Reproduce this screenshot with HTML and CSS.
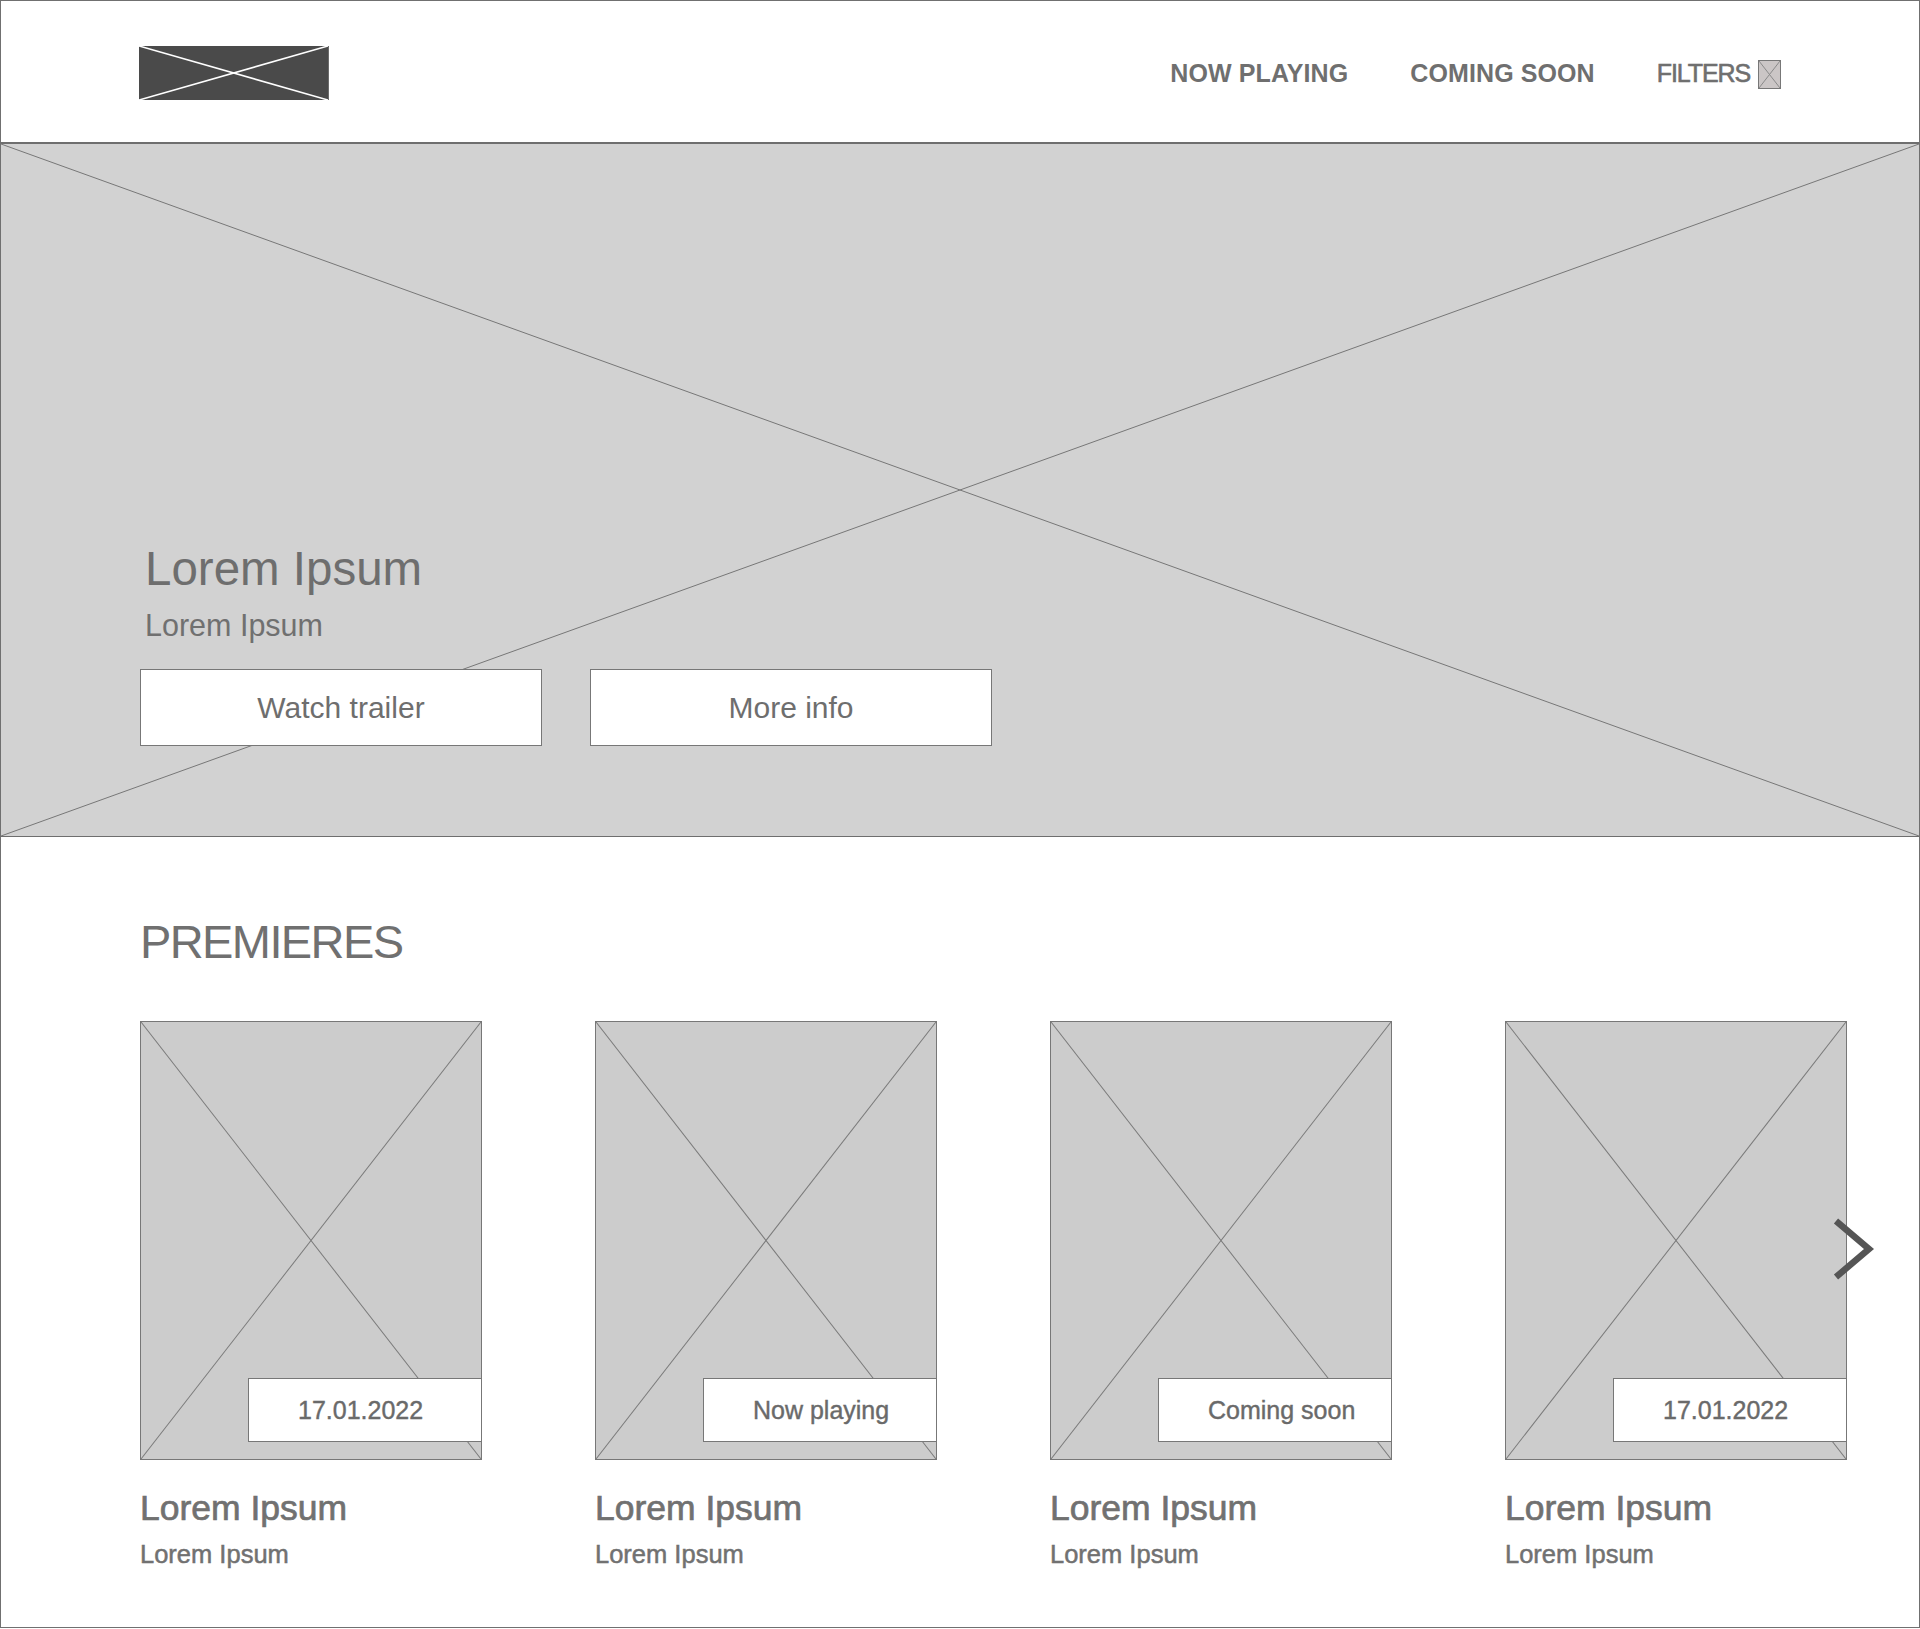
FILE: index.html
```html
<!DOCTYPE html>
<html lang="en">
<head>
<meta charset="utf-8">
<title>Cinema wireframe</title>
<link rel="stylesheet" href="styles.css">
</head>
<body>
<div class="frame">
  <header class="header">
    <div class="logo">
      <svg class="x-fill" viewBox="0 0 100 100" preserveAspectRatio="none">
        <line x1="0" y1="0" x2="100" y2="100" vector-effect="non-scaling-stroke"/>
        <line x1="0" y1="100" x2="100" y2="0" vector-effect="non-scaling-stroke"/>
      </svg>
    </div>
    <nav class="nav">
      <a class="nav-link">NOW PLAYING</a>
      <a class="nav-link">COMING SOON</a>
      <a class="nav-filter">FILTERS
        <span class="filter-icon">
          <svg class="x-fill" viewBox="0 0 100 100" preserveAspectRatio="none">
            <line x1="0" y1="0" x2="100" y2="100" vector-effect="non-scaling-stroke"/>
            <line x1="0" y1="100" x2="100" y2="0" vector-effect="non-scaling-stroke"/>
          </svg>
        </span>
      </a>
    </nav>
  </header>

  <section class="hero">
    <svg class="hero-x" viewBox="0 0 100 100" preserveAspectRatio="none">
      <line x1="0" y1="0" x2="100" y2="100" vector-effect="non-scaling-stroke"/>
      <line x1="0" y1="100" x2="100" y2="0" vector-effect="non-scaling-stroke"/>
    </svg>
    <div class="hero-content">
      <h1 class="hero-title">Lorem Ipsum</h1>
      <p class="hero-sub">Lorem Ipsum</p>
      <div class="hero-buttons">
        <button class="btn">Watch trailer</button>
        <button class="btn">More info</button>
      </div>
    </div>
  </section>

  <section class="premieres">
    <h2 class="section-title">PREMIERES</h2>
    <div class="cards">
      <article class="card">
        <div class="poster">
          <svg class="x-fill" viewBox="0 0 100 100" preserveAspectRatio="none">
            <line x1="0" y1="0" x2="100" y2="100" vector-effect="non-scaling-stroke"/>
            <line x1="0" y1="100" x2="100" y2="0" vector-effect="non-scaling-stroke"/>
          </svg>
          <span class="badge">17.01.2022</span>
        </div>
        <h3 class="card-title">Lorem Ipsum</h3>
        <p class="card-sub">Lorem Ipsum</p>
      </article>
      <article class="card">
        <div class="poster">
          <svg class="x-fill" viewBox="0 0 100 100" preserveAspectRatio="none">
            <line x1="0" y1="0" x2="100" y2="100" vector-effect="non-scaling-stroke"/>
            <line x1="0" y1="100" x2="100" y2="0" vector-effect="non-scaling-stroke"/>
          </svg>
          <span class="badge">Now playing</span>
        </div>
        <h3 class="card-title">Lorem Ipsum</h3>
        <p class="card-sub">Lorem Ipsum</p>
      </article>
      <article class="card">
        <div class="poster">
          <svg class="x-fill" viewBox="0 0 100 100" preserveAspectRatio="none">
            <line x1="0" y1="0" x2="100" y2="100" vector-effect="non-scaling-stroke"/>
            <line x1="0" y1="100" x2="100" y2="0" vector-effect="non-scaling-stroke"/>
          </svg>
          <span class="badge">Coming soon</span>
        </div>
        <h3 class="card-title">Lorem Ipsum</h3>
        <p class="card-sub">Lorem Ipsum</p>
      </article>
      <article class="card">
        <div class="poster">
          <svg class="x-fill" viewBox="0 0 100 100" preserveAspectRatio="none">
            <line x1="0" y1="0" x2="100" y2="100" vector-effect="non-scaling-stroke"/>
            <line x1="0" y1="100" x2="100" y2="0" vector-effect="non-scaling-stroke"/>
          </svg>
          <span class="badge">17.01.2022</span>
        </div>
        <h3 class="card-title">Lorem Ipsum</h3>
        <p class="card-sub">Lorem Ipsum</p>
      </article>
      <svg class="chevron" viewBox="0 0 46 68">
        <polyline points="7,6 40,34 7,62"/>
      </svg>
    </div>
  </section>
</div>
</body>
</html>
```

FILE: styles.css
```css
* { box-sizing: border-box; }

html, body {
  margin: 0;
  padding: 0;
  background: #ffffff;
}

body {
  font-family: "Liberation Sans", Arial, Helvetica, sans-serif;
  color: #707070;
}

.frame {
  width: 1920px;
  height: 1628px;
  border: 1px solid #707070;
  overflow: hidden;
}

.x-fill {
  position: absolute;
  left: 0;
  top: 0;
  width: 100%;
  height: 100%;
  display: block;
}

/* Header */
.header {
  height: 143px;
  border-bottom: 2px solid #6e6e6e;
  display: flex;
  align-items: center;
  justify-content: space-between;
  padding: 2px 138px 0 138px;
}

.logo {
  position: relative;
  width: 190px;
  height: 54px;
  background: #4a4a4a;
  border-right: 1px solid #6c6c6c;
}

.logo .x-fill line {
  stroke: #ffffff;
  stroke-width: 1.6;
}

.nav {
  display: flex;
  align-items: center;
  gap: 62px;
  margin-top: 1px;
}

.nav-link {
  font-size: 25px;
  font-weight: 700;
  letter-spacing: 0.1px;
  color: #6f6f6f;
  line-height: 30px;
}

.nav-filter {
  display: flex;
  align-items: center;
  gap: 8px;
  font-size: 25px;
  font-weight: 400;
  letter-spacing: -1.1px;
  color: #6f6f6f;
  -webkit-text-stroke: 0.6px #6f6f6f;
  line-height: 30px;
}

.filter-icon {
  position: relative;
  width: 23px;
  height: 29px;
  background: #cbc6c6;
  border: 1px solid #777777;
  margin-top: 2px;
}

.filter-icon .x-fill line {
  stroke: #8a8a8a;
  stroke-width: 1;
}

/* Hero */
.hero {
  position: relative;
  height: 693px;
  background: #d2d2d2;
  border-bottom: 1px solid #6e6e6e;
}

.hero-x line {
  stroke: #777777;
  stroke-width: 1;
}

.hero-x {
  position: absolute;
  left: 0;
  top: 0;
  width: 100%;
  height: 100%;
}

.hero-content {
  position: relative;
  padding: 396px 0 0 139px;
}

.hero-title {
  margin: 0;
  padding-left: 5px;
  font-size: 47.5px;
  line-height: 57px;
  font-weight: 400;
  color: #6e6e6e;
}

.hero-sub {
  margin: 10px 0 0 0;
  padding-left: 5px;
  font-size: 30.5px;
  line-height: 36px;
  color: #707070;
}

.hero-buttons {
  display: flex;
  gap: 48px;
  margin-top: 26px;
}

.btn {
  width: 402px;
  height: 77px;
  background: #ffffff;
  border: 1px solid #777777;
  font-family: "Liberation Sans", Arial, Helvetica, sans-serif;
  font-size: 30px;
  color: #6e6e6e;
  padding: 0;
  margin: 0;
}

/* Premieres */
.premieres {
  padding: 77px 0 0 139px;
}

.section-title {
  margin: 0;
  font-size: 47px;
  line-height: 56px;
  font-weight: 400;
  letter-spacing: -1.6px;
  color: #707070;
}

.cards {
  position: relative;
  display: flex;
  gap: 113px;
  margin-top: 51px;
}

.card {
  width: 342px;
}

.poster {
  position: relative;
  width: 342px;
  height: 439px;
  background: #cccccc;
  border: 1px solid #777777;
}

.poster .x-fill line {
  stroke: #7a7a7a;
  stroke-width: 1;
}

.badge {
  position: absolute;
  right: -1px;
  bottom: 17px;
  width: 234px;
  height: 64px;
  background: #ffffff;
  border: 1px solid #777777;
  display: flex;
  align-items: center;
  justify-content: flex-start;
  padding-left: 49px;
  font-size: 25px;
  color: #6a6a6a;
  -webkit-text-stroke: 0.4px #6a6a6a;
}

.card-title {
  margin: 27px 0 0 0;
  font-size: 35.5px;
  line-height: 42px;
  font-weight: 400;
  color: #717171;
  -webkit-text-stroke: 0.7px #717171;
}

.card-sub {
  margin: 10px 0 0 0;
  font-size: 25.5px;
  line-height: 30px;
  color: #717171;
  -webkit-text-stroke: 0.5px #717171;
}

.chevron {
  position: absolute;
  left: 1689px;
  top: 194px;
  width: 46px;
  height: 68px;
}

.chevron polyline {
  fill: none;
  stroke: #555555;
  stroke-width: 6.5;
  stroke-linejoin: miter;
  stroke-linecap: butt;
}
```
